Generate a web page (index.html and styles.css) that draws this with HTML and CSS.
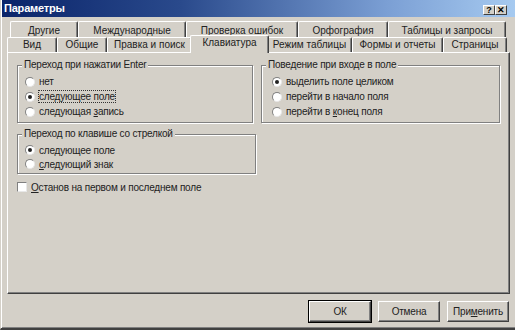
FILE: index.html
```html
<!DOCTYPE html>
<html lang="ru">
<head>
  <meta charset="UTF-8">
  <title>Параметры</title>
  <link rel="stylesheet" href="styles.css">
</head>
<body>
  <div class="window">

    <!-- Title bar -->
    <div class="titlebar">
      <span class="title">Параметры</span>
      <div class="title-buttons">
        <span class="tbtn">?</span>
        <span class="tbtn">&#x2715;</span>
      </div>
    </div>

    <!-- Tabs -->
    <div class="tabs">
      <div class="tab-row back">
        <div class="tab" style="width:68px">Другие</div>
        <div class="tab" style="width:108px">Международные</div>
        <div class="tab" style="width:112px">Проверка ошибок</div>
        <div class="tab" style="width:90px">Орфография</div>
        <div class="tab" style="width:118px">Таблицы и запросы</div>
      </div>
      <div class="tab-row front">
        <div class="tab" style="width:50px">Вид</div>
        <div class="tab" style="width:50px">Общие</div>
        <div class="tab" style="width:85px">Правка и поиск</div>
        <div class="tab active" style="width:79px">Клавиатура</div>
        <div class="tab" style="width:85px">Режим таблицы</div>
        <div class="tab" style="width:91px">Формы и отчеты</div>
        <div class="tab" style="width:64px">Страницы</div>
      </div>
    </div>

    <!-- Tab page -->
    <div class="panel">
      <div class="col">
        <div class="group enter">
          <span class="legend">Переход при нажатии Enter</span>
          <label class="opt"><span class="radio"></span><span>нет</span></label>
          <label class="opt"><span class="radio on"></span><span class="focus">следующее поле</span></label>
          <label class="opt"><span class="radio"></span><span>следующая <u>з</u>апись</span></label>
        </div>

        <div class="group arrow">
          <span class="legend">Переход по клавише со стрелкой</span>
          <label class="opt"><span class="radio on"></span><span>следующее поле</span></label>
          <label class="opt"><span class="radio"></span><span><u>с</u>ледующий знак</span></label>
        </div>

        <label class="opt check-row"><span class="check"></span><span><u>О</u>станов на первом и последнем поле</span></label>
      </div>

      <div class="col">
        <div class="group behave">
          <span class="legend">Поведение при входе в поле</span>
          <label class="opt"><span class="radio on"></span><span>выделить поле целиком</span></label>
          <label class="opt"><span class="radio"></span><span>перейти в начало поля</span></label>
          <label class="opt"><span class="radio"></span><span>перейти в <u>к</u>онец поля</span></label>
        </div>
      </div>
    </div>

    <!-- Dialog buttons -->
    <div class="buttons">
      <button class="btn default">ОК</button>
      <button class="btn">Отмена</button>
      <button class="btn">При<u>м</u>енить</button>
    </div>
  </div>
</body>
</html>
```

FILE: styles.css
```css
/* Classic dialog colours */
:root {
  --face: #d4d0c8;
  --light: #ffffff;
  --shadow: #808080;
  --dark: #404040;
  --text: #222;
}

* {
  margin: 0;
  padding: 0;
  box-sizing: border-box;
}

body {
  width: 515px;
  height: 330px;
  overflow: hidden;
  background: var(--face);
  font-family: "Liberation Sans", Arial, sans-serif;
  font-size: 10px;
  color: var(--text);
}

.window {
  width: 517px;
  height: 330px;
  background: var(--face);
  border-left: 1px solid var(--face);
  border-bottom: 2px solid var(--dark);
  box-shadow: inset 1px 0 0 var(--light), inset 0 -1px 0 var(--shadow);
  display: flex;
  flex-direction: column;
}

/* Title bar */
.titlebar {
  height: 17px;
  margin-left: 1px;
  margin-right: 2px;
  background: linear-gradient(to right, #0a246a 0%, #2a4a8c 35%, #7b9fd4 75%, #a6caf0 100%);
  display: flex;
  align-items: center;
  justify-content: space-between;
  padding: 0 8px 1px 2px;
}

.title {
  color: #fff;
  font-weight: bold;
  font-size: 11px;
  letter-spacing: -0.2px;
}

.title-buttons {
  display: flex;
  margin-top: 3px;
}

.tbtn {
  width: 12px;
  height: 10px;
  background: var(--face);
  border: 1px solid;
  border-color: var(--light) var(--dark) var(--dark) var(--light);
  font-size: 9px;
  font-weight: bold;
  line-height: 8px;
  text-align: center;
  color: #000;
}

/* Tabs */
.tabs {
  margin-top: 4px;
  display: flex;
  flex-direction: column;
}

.tab-row {
  display: flex;
  height: 16px;
}

.tab-row.back {
  margin-left: 9px;
}

.tab-row.front {
  margin-left: 6px;
  height: 15px;
  position: relative;
  z-index: 2;
}

.tab {
  height: 100%;
  background: var(--face);
  border-top: 1px solid var(--light);
  border-left: 1px solid var(--light);
  border-right: 1px solid var(--dark);
  box-shadow: inset -1px 0 0 var(--shadow);
  border-radius: 2px 2px 0 0;
  text-align: center;
  line-height: 14px;
  white-space: nowrap;
}

.back .tab {
  padding-top: 2px;
}

.tab.active {
  height: 18px;
  margin: -2px -2px 0;
  line-height: 13px;
  position: relative;
}

/* Tab page */
.panel {
  margin-left: 6px;
  width: 503px;
  height: 242px;
  border-top: 1px solid var(--light);
  border-left: 1px solid var(--light);
  border-right: 1px solid var(--dark);
  border-bottom: 1px solid var(--dark);
  box-shadow: inset -1px -1px 0 var(--shadow);
  padding: 12px 0 0 9px;
  display: grid;
  grid-template-columns: 239px 239px;
  column-gap: 5px;
  align-items: start;
}

.col {
  display: flex;
  flex-direction: column;
}

.group {
  display: flex;
  flex-direction: column;
  border: 1px solid var(--shadow);
  box-shadow: inset 1px 1px 0 var(--light), 1px 1px 0 var(--light);
  padding: 0 0 3px 7px;
}

.group.enter {
  width: 236px;
}

.group.arrow {
  margin-top: 11px;
  padding-bottom: 2px;
}

.legend {
  align-self: flex-start;
  margin: -7px 0 3px -3px;
  padding: 0 2px;
  background: var(--face);
  line-height: 12px;
  letter-spacing: -0.2px;
}

.opt {
  display: flex;
  align-items: center;
  height: 15px;
  gap: 4px;
  white-space: nowrap;
  letter-spacing: -0.2px;
}

.arrow .opt {
  height: 14px;
}

.behave .opt {
  margin-left: 3px;
}

.radio {
  width: 10px;
  height: 10px;
  border-radius: 50%;
  background: #fff;
  border: 1px solid;
  border-color: var(--shadow) #e8e8e8 #e8e8e8 var(--shadow);
  display: flex;
  align-items: center;
  justify-content: center;
  flex: none;
}

.radio.on::after {
  content: "";
  width: 4px;
  height: 4px;
  border-radius: 50%;
  background: #222;
}

.focus {
  outline: 1px dotted #333;
  line-height: 11px;
}

.check-row {
  margin-top: 6px;
  height: 14px;
}

.check {
  width: 10px;
  height: 10px;
  flex: none;
  background: #fff;
  border: 1px solid;
  border-color: var(--shadow) #e8e8e8 #e8e8e8 var(--shadow);
}

u {
  text-decoration-thickness: 1px;
  text-underline-offset: 1px;
}

/* Dialog buttons */
.buttons {
  display: flex;
  justify-content: flex-end;
  gap: 7px;
  margin-top: 7px;
  padding-right: 8px;
}

.btn {
  width: 62px;
  height: 21px;
  background: var(--face);
  border: 1px solid;
  border-color: var(--light) var(--dark) var(--dark) var(--light);
  box-shadow: inset -1px -1px 0 var(--shadow);
  font-family: inherit;
  font-size: 10px;
  color: var(--text);
  letter-spacing: -0.2px;
}

.btn.default {
  outline: 1px solid #000;
}
```
